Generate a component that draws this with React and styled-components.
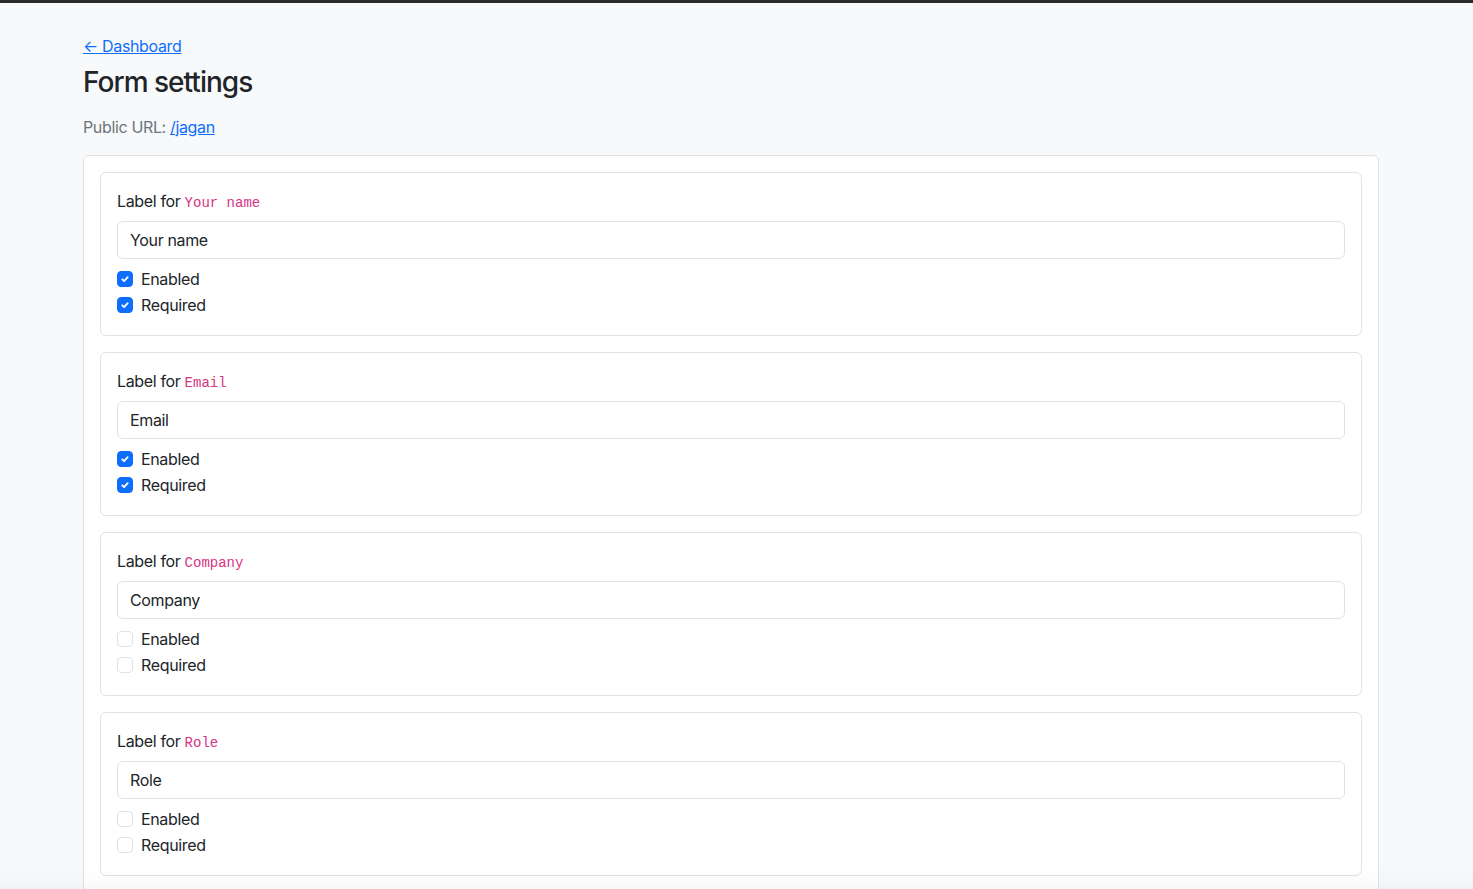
import React from "react";
import styled, { createGlobalStyle } from "styled-components";

const GlobalStyle = createGlobalStyle`
  *, *::before, *::after { box-sizing: border-box; }
  html, body { margin: 0; padding: 0; }
  body {
    background: #f8f9fa;
    color: #212529;
    font-family: Inter, "Noto Sans", "Liberation Sans", sans-serif;
    font-size: 16px;
    line-height: 1.5;
    letter-spacing: -0.022em;
    border-top: 3px solid #2b2b2b;
  }
`;

const Page = styled.main`
  max-width: 1296px;
  margin: 0 0 0 83px;
  padding: 31px 0 24px;
`;

const BackLink = styled.a`
  display: block;
  width: max-content;
  height: 24px;
  color: #0d6efd;
  text-decoration: underline;
  margin-bottom: 8px;
`;

const Title = styled.h1`
  font-size: 28px;
  font-weight: 500;
  line-height: 1.2;
  letter-spacing: -0.035em;
  margin: 0 0 15px;
`;

const Meta = styled.p`
  color: #6c757d;
  height: 24px;
  margin: 0 0 16px;
  a { color: #0d6efd; text-decoration: underline; }
`;

const Panel = styled.section`
  background: #fff;
  border: 1px solid #dee2e6;
  border-radius: 6px;
  padding: 16px;
  display: flex;
  flex-direction: column;
  gap: 16px;
`;

const FieldCard = styled.div`
  border: 1px solid #dee2e6;
  border-radius: 6px;
  padding: 16px;
`;

const FieldLabel = styled.label`
  display: block;
  height: 24px;
  margin-bottom: 8px;
`;

const Code = styled.code`
  font-family: "Liberation Mono", "DejaVu Sans Mono", monospace;
  font-size: 14px;
  line-height: 1;
  letter-spacing: 0;
  color: #d63384;
`;

const TextInput = styled.input`
  display: block;
  width: 100%;
  height: 38px;
  padding: 6px 12px;
  font: inherit;
  letter-spacing: inherit;
  color: #212529;
  background: #fff;
  border: 1px solid #dee2e6;
  border-radius: 6px;
  margin-bottom: 8px;
  outline: none;
`;

const Check = styled.label`
  display: flex;
  align-items: center;
  gap: 8px;
  height: 24px;
  margin-bottom: 2px;
`;

const Box = styled.span`
  width: 16px;
  height: 16px;
  flex: none;
  border-radius: 4px;
  display: inline-flex;
  align-items: center;
  justify-content: center;
  background: ${(p) => (p.$on ? "#0d6efd" : "#fff")};
  border: 1px solid ${(p) => (p.$on ? "#0d6efd" : "#dee2e6")};
`;

const Fade = styled.div`
  position: fixed;
  left: 0;
  right: 0;
  bottom: 0;
  height: 22px;
  pointer-events: none;
  background: linear-gradient(rgba(0, 0, 0, 0), rgba(0, 0, 0, 0.025));
`;

const fields = [
  { key: "Your name", value: "Your name", enabled: true, required: true },
  { key: "Email", value: "Email", enabled: true, required: true },
  { key: "Company", value: "Company", enabled: false, required: false },
  { key: "Role", value: "Role", enabled: false, required: false },
];

function Checkbox({ on, children }) {
  return (
    <Check>
      <Box $on={on}>
        {on && (
          <svg width="12" height="12" viewBox="0 0 20 20">
            <path d="M5.5 10.5l3 3 6-6.5" fill="none" stroke="#fff" strokeWidth="3" strokeLinecap="round" strokeLinejoin="round" />
          </svg>
        )}
      </Box>
      {children}
    </Check>
  );
}

export default function App() {
  return (
    <>
      <GlobalStyle />
      <Page>
        <BackLink href="#">← Dashboard</BackLink>
        <Title>Form settings</Title>
        <Meta>
          Public URL: <a href="#">/jagan</a>
        </Meta>
        <Panel>
          {fields.map((f) => (
            <FieldCard key={f.key}>
              <FieldLabel>
                Label for <Code>{f.key}</Code>
              </FieldLabel>
              <TextInput defaultValue={f.value} />
              <Checkbox on={f.enabled}>Enabled</Checkbox>
              <Checkbox on={f.required}>Required</Checkbox>
            </FieldCard>
          ))}
        </Panel>
      </Page>
      <Fade />
    </>
  );
}
